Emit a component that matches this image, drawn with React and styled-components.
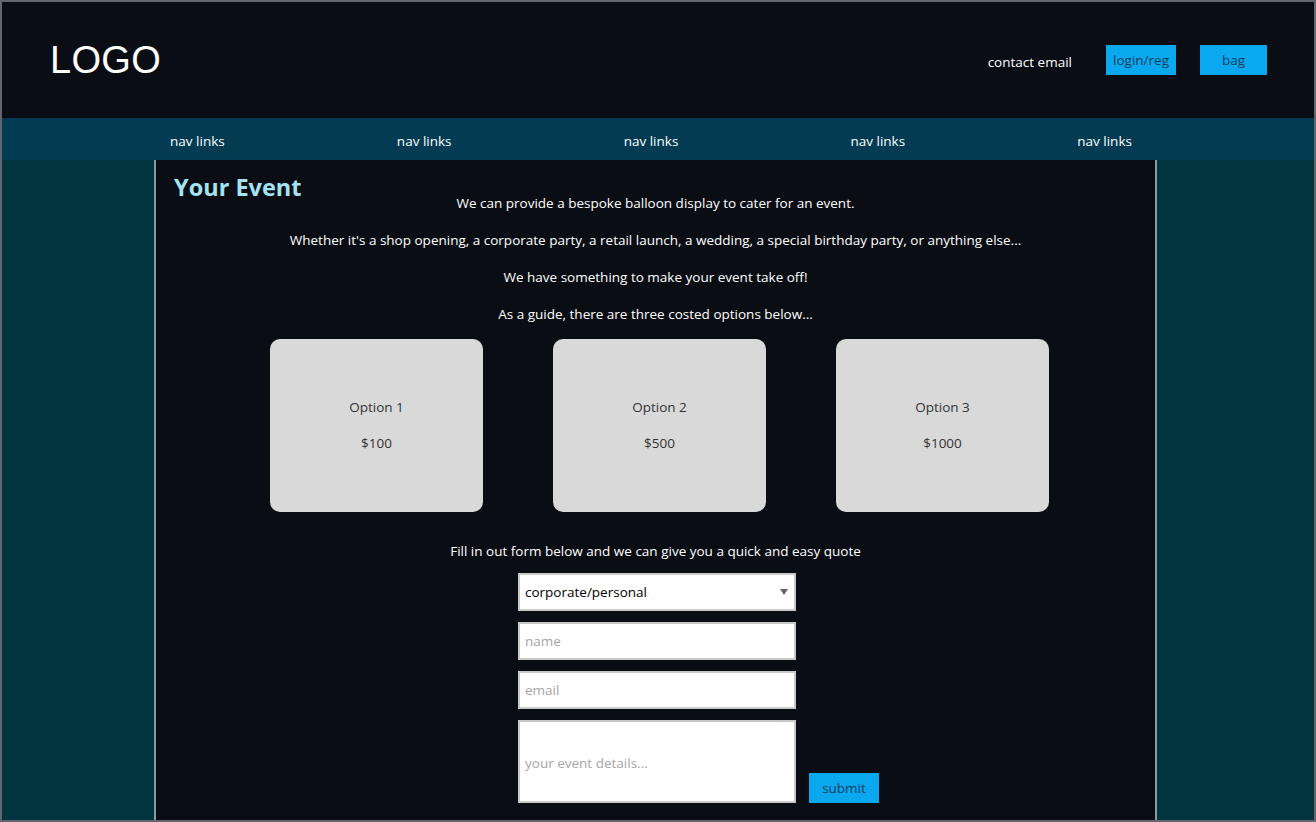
import React from 'react'
import styled, { createGlobalStyle } from 'styled-components'

const Global = createGlobalStyle`
  html, body { margin: 0; padding: 0; background: #0a0d14; }
  body { font-family: "Open Sans", "Noto Sans", sans-serif; }
  * { box-sizing: border-box; }
`

const Frame = styled.div`
  width: 1316px;
  height: 822px;
  border: 2px solid #62676d;
  display: flex;
  flex-direction: column;
  overflow: hidden;
`
const Header = styled.header`
  height: 116px;
  flex: none;
  background: #0a0d14;
  display: flex;
  align-items: center;
  justify-content: space-between;
  padding: 0 47px 0 48px;
`
const Logo = styled.div`
  font-family: "Liberation Sans", Arial, sans-serif;
  font-size: 38px;
  color: #fff;
  letter-spacing: 0.3px;
`
const HeaderRight = styled.div`
  display: flex;
  align-items: center;
  gap: 24px;
`
const Contact = styled.span`
  color: #fff;
  font-size: 13.5px;
  margin-right: 10px;
  margin-top: 3px;
`
const TopButton = styled.button`
  background: #0aa8ee;
  border: none;
  color: #0c3f5c;
  font-family: inherit;
  font-size: 13.5px;
  height: 30px;
  width: ${p => p.$w}px;
  padding: 0;
`
const Nav = styled.nav`
  height: 42px;
  flex: none;
  background: #033b53;
  display: grid;
  grid-template-columns: repeat(5, 1fr);
  padding: 0 96px 0 82px;
  align-items: center;
`
const NavLink = styled.a`
  color: #fff;
  font-size: 13.5px;
  text-align: center;
  margin-top: 3px;
`
const Body = styled.div`
  flex: 1;
  display: grid;
  grid-template-columns: 152px 1003px 1fr;
  background: #02353f;
`
const Main = styled.main`
  background: #0a0d14;
  border-left: 2px solid #8c9aa0;
  border-right: 2px solid #8c9aa0;
  position: relative;
  padding: 25px 18px 0;
  display: flex;
  flex-direction: column;
  align-items: center;
`
const Title = styled.h1`
  position: absolute;
  left: 18px;
  top: 11px;
  margin: 0;
  font-size: 23.5px;
  font-weight: 700;
  color: #a3e3f2;
`
const Para = styled.p`
  margin: 0;
  color: #fff;
  font-size: 13.5px;
  line-height: 37px;
  text-align: center;
`
const Cards = styled.div`
  display: flex;
  gap: 70px;
  margin: 6px 0 0 8px;
`
const Card = styled.div`
  width: 213px;
  height: 173px;
  background: #d9d9d9;
  border-radius: 10px;
  display: flex;
  flex-direction: column;
  align-items: center;
  justify-content: center;
  gap: 18px;
  color: #333;
  font-size: 13.5px;
  padding-bottom: 2px;
`
const FormIntro = styled(Para)`
  margin-top: 28px;
  line-height: 22px;
`
const Form = styled.form`
  display: grid;
  grid-template-columns: 278px 83px;
  column-gap: 13px;
  row-gap: 11px;
  margin-top: 11px;
  margin-left: 99px;
`
const fieldCss = `
  width: 278px;
  border: 2px solid #c8c8c8;
  background: #fff;
  font-family: "Open Sans", "Noto Sans", sans-serif;
  font-size: 13.5px;
  color: #000;
  padding: 0 5px;
  outline: none;
  &::placeholder { color: #a6a6a6; }
`
const Select = styled.div`
  ${fieldCss}
  height: 38px;
  display: flex;
  align-items: center;
  justify-content: space-between;
  grid-column: 1;
`
const Caret = styled.span`
  width: 0;
  height: 0;
  border-left: 4.5px solid transparent;
  border-right: 4.5px solid transparent;
  border-top: 6px solid #666;
  margin-right: 1px;
`
const Input = styled.input`
  ${fieldCss}
  height: 38px;
  grid-column: 1;
`
const Details = styled.textarea`
  ${fieldCss}
  height: 83px;
  resize: none;
  padding-top: 32px;
  grid-column: 1;
`
const Submit = styled.button`
  grid-column: 2;
  grid-row: 4;
  align-self: end;
  width: 70px;
  height: 30px;
  background: #0aa8ee;
  border: none;
  color: #0c3f5c;
  font-family: inherit;
  font-size: 13.5px;
  padding: 0;
`

const options = [
  { name: 'Option 1', price: '$100' },
  { name: 'Option 2', price: '$500' },
  { name: 'Option 3', price: '$1000' },
]

export default function App() {
  return (
    <Frame>
      <Global />
      <Header>
        <Logo>LOGO</Logo>
        <HeaderRight>
          <Contact>contact email</Contact>
          <TopButton $w={70}>login/reg</TopButton>
          <TopButton $w={67}>bag</TopButton>
        </HeaderRight>
      </Header>
      <Nav>
        {[0, 1, 2, 3, 4].map(i => <NavLink key={i}>nav links</NavLink>)}
      </Nav>
      <Body>
        <div />
        <Main>
          <Title>Your Event</Title>
          <Para>We can provide a bespoke balloon display to cater for an event.</Para>
          <Para>Whether it's a shop opening, a corporate party, a retail launch, a wedding, a special birthday party, or anything else...</Para>
          <Para>We have something to make your event take off!</Para>
          <Para>As a guide, there are three costed options below...</Para>
          <Cards>
            {options.map(o => (
              <Card key={o.name}>
                <span>{o.name}</span>
                <span>{o.price}</span>
              </Card>
            ))}
          </Cards>
          <FormIntro>Fill in out form below and we can give you a quick and easy quote</FormIntro>
          <Form onSubmit={e => e.preventDefault()}>
            <Select>corporate/personal<Caret /></Select>
            <Input placeholder="name" />
            <Input placeholder="email" />
            <Details placeholder="your event details..." />
            <Submit>submit</Submit>
          </Form>
        </Main>
        <div />
      </Body>
    </Frame>
  )
}
